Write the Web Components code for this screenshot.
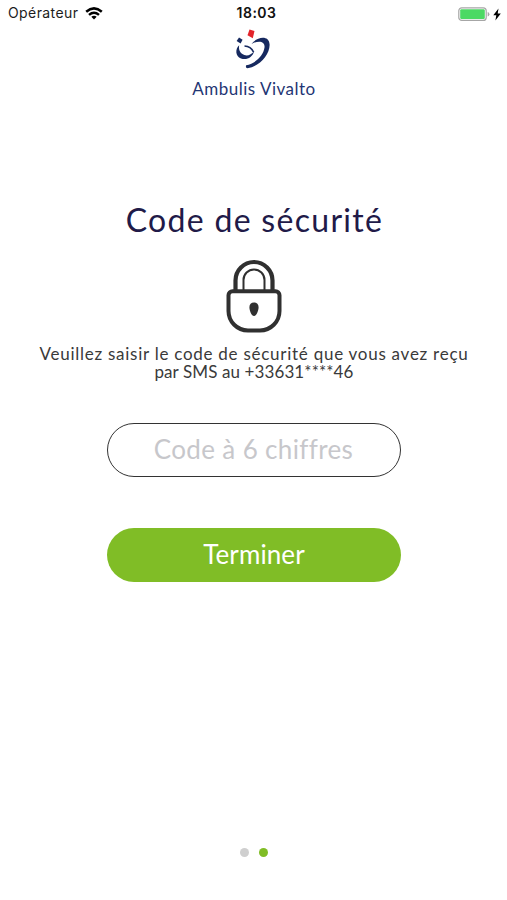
<!DOCTYPE html>
<html lang="fr">
<head>
<meta charset="utf-8">
<title>Code de sécurité</title>
<style>
html,body{margin:0;background:#fff}
body{font-family:Lato,"Open Sans",sans-serif;height:900px;overflow:hidden}
</style>
</head>
<body>
<security-screen></security-screen>
<script>
const define = (name, html) => customElements.define(name, class extends HTMLElement {
  constructor() {
    super();
    this.attachShadow({ mode: 'open' }).innerHTML = html;
  }
});

define('status-bar', `
<style>
:host{display:grid;grid-template-columns:1fr auto 1fr;align-items:center;height:28px;padding:0 6px 0 8px;box-sizing:border-box;font-family:Inter,"Liberation Sans",sans-serif;font-size:14px;line-height:16px;color:#1c1c1c}
.left,.right{display:flex;align-items:center}
.left{gap:7px;letter-spacing:.4px}
.left span,b{padding-bottom:2px}
.left svg{margin-top:-2px}
.right{justify-content:flex-end;gap:3px}
b{font-weight:600;font-size:14px;letter-spacing:.5px;color:#111;padding-left:4px}
svg{display:block}
</style>
<div class="left"><span>Opérateur</span>
<svg width="18" height="13" viewBox="0 0 18 13" fill="none" stroke="#000" stroke-width="2.500"><path d="M1.200 4.700Q9-2 16.800 4.700M4 7.900Q9 3.700 14 7.900"/><path d="M9 12.500L6.300 9.700Q9 7.600 11.700 9.700Z" fill="#000" stroke="none"/></svg></div>
<b>18:03</b>
<div class="right">
<svg width="32" height="15" viewBox="0 0 32 15"><rect x=".8" y=".8" width="27.400" height="12.600" rx="3" fill="#fff" stroke="#a6a6a6" stroke-width="1.200"/><rect x="2.200" y="2.200" width="24.600" height="9.800" rx="1.200" fill="#4cd964"/><path d="M29.700 5v4.600q1.700-.6 1.700-2.300T29.700 5z" fill="#a6a6a6"/></svg>
<svg width="8" height="13" viewBox="0 0 8 13"><path d="M5.500.5L.3 7.200h3L2.400 12.500 7.800 5.500H4.700z" fill="#000"/></svg>
</div>`);

define('brand-header', `
<style>
:host{display:flex;flex-direction:column;align-items:center;color:#1f3674}
svg{display:block}
span{font-size:17px;line-height:22px;margin-top:6px;white-space:nowrap;letter-spacing:.5px;padding-left:1px}
</style>
<svg width="36" height="44" viewBox="0 0 36 44"><path d="M14.500 1.500l5 1.500-1.700 7.200-5.300-3z" fill="#e3242b"/>
<path d="M4 9.500l3.600 2.200-2 3.700-4-2.500z" fill="#16295f"/>
<g fill="#16295f"><path d="M4.200 17.300C0 21 .3 28.300 6 30.500c5.500 2 11.500-1 13.300-7.500-3 3.800-6.800 5.200-10 4-4-1.500-6-5-5.100-9.700z"/>
<path d="M16.500 16C21.500 9 34 6.500 34.600 16.500 35 26.500 24 39 12.500 40.200c-1.500-.3-2-1.600-1.300-3C20 36 28.500 27.500 29.500 19.500c.8-6.500-6-7.500-13-3.500z"/></g><path d="M9.500 18c4 .2 7.300 2.300 9 6" fill="none" stroke="#16295f" stroke-width="1.700"/></svg>
<span><slot></slot></span>`);

define('padlock-icon', `
<style>:host{display:block}svg{display:block}</style>
<svg width="56" height="74" viewBox="0 0 56 74" fill="none" stroke="#303030"><path d="M9.500 31V21.500a18.500 18.500 0 0 1 37 0V31" stroke-width="4.200"/><path d="M17.500 31V21a10.500 10.500 0 0 1 21 0v10" stroke-width="2"/><path d="M6.500 32.200h43a4 4 0 0 1 4 4V52a19.500 19.500 0 0 1-19.500 19.500H22A19.500 19.500 0 0 1 2.500 52V36.200a4 4 0 0 1 4-4z" stroke-width="4" fill="#fff"/><path d="M28 43.500c-2.900 0-4.600 2-4.600 4.700 0 3.300 2.200 8.800 4.600 8.800s4.600-5.500 4.600-8.800c0-2.700-1.700-4.700-4.600-4.700z" fill="#303030" stroke="none"/></svg>`);

define('code-field', `
<style>
:host{display:flex;align-items:center;justify-content:center;width:294px;height:54px;box-sizing:border-box;border:1.500px solid #333;border-radius:27px;background:#fff;color:#c7c7cb;font-size:26px;letter-spacing:.35px;padding-bottom:3px}
</style><span><slot></slot></span>`);

define('primary-button', `
<style>
:host{display:block;width:294px;height:54px}
button{display:flex;align-items:center;justify-content:center;width:100%;height:100%;border:0;border-radius:27px;background:#80bd26;color:#fff;font:inherit;font-size:26px;letter-spacing:.1px;padding:0 0 3px 1px}
</style><button type="button"><slot></slot></button>`);

define('page-dots', `
<style>
:host{display:flex;gap:10px}
i{width:9px;height:9px;border-radius:50%;background:#cfcfcf}
i.on{background:#80bd26}
</style><i></i><i class="on"></i>`);

define('security-screen', `
<style>
:host{display:flex;flex-direction:column;align-items:center;width:507px;height:900px;background:#fff}
status-bar{width:100%}
h1{margin:100px 0 0;padding-left:2px;font-weight:400;font-size:32px;line-height:40px;letter-spacing:1.300px;color:#211a48;white-space:nowrap}
padlock-icon{margin-top:19px}
p{margin:12px 0 0;padding-left:1px;font-size:17px;line-height:18px;text-align:center;color:#3a3a3a;white-space:nowrap}
p span{display:block}
.a{letter-spacing:.74px}
.b{letter-spacing:.1px}
code-field{margin-top:42px}
primary-button{margin-top:51px}
page-dots{margin:auto 0 43px 1px}
</style>
<status-bar></status-bar>
<brand-header>Ambulis Vivalto</brand-header>
<h1>Code de sécurité</h1>
<padlock-icon></padlock-icon>
<p><span class="a">Veuillez saisir le code de sécurité que vous avez reçu</span><span class="b">par SMS au +33631****46</span></p>
<code-field>Code à 6 chiffres</code-field>
<primary-button>Terminer</primary-button>
<page-dots></page-dots>`);
</script>
</body>
</html>
